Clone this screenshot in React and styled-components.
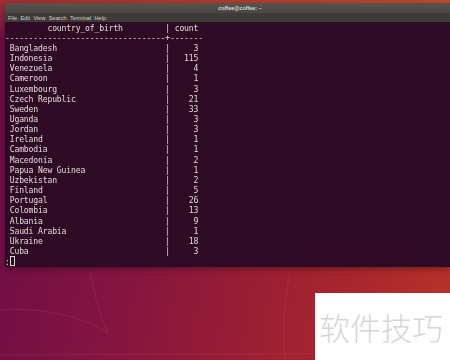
import React from "react";
import styled, { createGlobalStyle } from "styled-components";

const Global = createGlobalStyle`
  html, body { margin: 0; padding: 0; width: 450px; height: 360px; overflow: hidden; }
  body { background: #7a1242; }
`;

const Desktop = styled.div`
  position: relative;
  width: 450px;
  height: 360px;
  overflow: hidden;
  background:
    linear-gradient(180deg, rgba(200, 80, 40, 0.55) 0px, rgba(200, 80, 40, 0) 40px),
    linear-gradient(100deg, #6c0c47 0%, #85153f 35%, #a2222f 70%, #b83229 100%);
  display: flex;
  flex-direction: column;
`;

const TopStrip = styled.div`
  height: 3px;
  flex: none;
  background: linear-gradient(90deg, #a92a33 0%, #b43a2e 50%, #c24a29 100%);
`;

const Window = styled.div`
  margin-left: 5px;
  display: flex;
  flex-direction: column;
  flex: none;
  box-shadow: 0 2px 6px rgba(0, 0, 0, 0.35);
`;

const TitleBar = styled.div`
  height: 10px;
  background: linear-gradient(180deg, #57544e 0%, #494741 100%);
  display: flex;
  align-items: center;
  justify-content: center;
  padding-left: 25px;
  font-family: "Liberation Sans", "DejaVu Sans", sans-serif;
  font-size: 5.4px;
  font-weight: 700;
  color: #dcd8d0;
`;

const MenuBar = styled.div`
  height: 9px;
  background: #3e3c38;
  display: flex;
  align-items: center;
  gap: 3.4px;
  padding-left: 3px;
  font-family: "Liberation Sans", "DejaVu Sans", sans-serif;
  font-size: 5.6px;
  color: #d4d0c8;
`;

const Term = styled.pre`
  margin: 0;
  height: 245px;
  padding: 0.6px 0 0 0;
  box-sizing: border-box;
  background: #2e0a24;
  color: #e0dbd8;
  font-family: "DejaVu Sans Mono", "Liberation Mono", monospace;
  font-size: 8.1px;
  letter-spacing: -0.16px;
  line-height: 10.15px;
  white-space: pre;
  overflow: hidden;
  will-change: transform;
`;

const Cursor = styled.span`
  display: inline-block;
  width: 3.6px;
  height: 8px;
  border: 0.8px solid #ded9d6;
  vertical-align: -1.5px;
`;

const Wallpaper = styled.svg`
  position: absolute;
  left: 0;
  top: 267px;
  width: 450px;
  height: 93px;
  pointer-events: none;
`;

const Watermark = styled.div`
  position: absolute;
  left: 315px;
  top: 293px;
  right: 0;
  bottom: 0;
  background: #ffffff;
  display: flex;
  align-items: center;
  padding-left: 4px;
  font-family: "Noto Sans CJK SC", "Noto Sans", sans-serif;
  font-size: 31px;
  font-weight: 300;
  color: #d6d6d6;
`;

const rows = [
  ["Bangladesh", 3],
  ["Indonesia", 115],
  ["Venezuela", 4],
  ["Cameroon", 1],
  ["Luxembourg", 3],
  ["Czech Republic", 21],
  ["Sweden", 33],
  ["Uganda", 3],
  ["Jordan", 3],
  ["Ireland", 1],
  ["Cambodia", 1],
  ["Macedonia", 2],
  ["Papua New Guinea", 1],
  ["Uzbekistan", 2],
  ["Finland", 5],
  ["Portugal", 26],
  ["Colombia", 13],
  ["Albania", 9],
  ["Saudi Arabia", 1],
  ["Ukraine", 18],
  ["Cuba", 3],
];

const W = 32;
const head = "country_of_birth";
const leftPad = Math.floor((W - head.length) / 2);
const headerLine =
  " " + " ".repeat(leftPad) + head + " ".repeat(W - head.length - leftPad) + " | count";
const dashLine = "-".repeat(W + 2) + "+" + "-".repeat(7);
const bodyLines = rows.map(
  ([n, c]) => " " + n.padEnd(W) + " | " + String(c).padStart(5)
);
const text = [headerLine, dashLine, ...bodyLines].join("\n") + "\n:";

export default function App() {
  return (
    <>
      <Global />
      <Desktop>
        <TopStrip />
        <Window>
          <TitleBar>coffee@coffee: ~</TitleBar>
          <MenuBar>
            <span>File</span>
            <span>Edit</span>
            <span>View</span>
            <span>Search</span>
            <span>Terminal</span>
            <span>Help</span>
          </MenuBar>
          <Term>
            {text}
            <Cursor />
          </Term>
        </Window>
        <Wallpaper viewBox="0 0 450 93">
          <g fill="none" stroke="rgba(255,120,160,0.12)" strokeWidth="1.2">
            <path d="M0 43 C40 40 80 48 108 66" />
            <path d="M90 5 C95 30 100 50 108 66" />
            <path d="M0 88 L450 86" />
            <path d="M290 5 C285 30 282 60 285 93" />
          </g>
        </Wallpaper>
        <Watermark>软件技巧</Watermark>
      </Desktop>
    </>
  );
}
